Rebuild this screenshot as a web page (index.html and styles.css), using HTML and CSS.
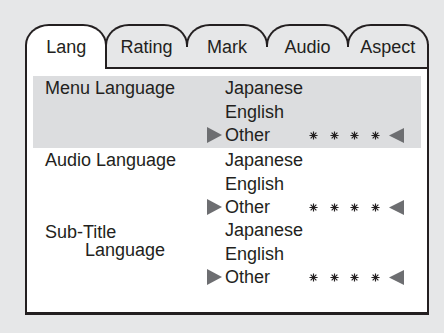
FILE: index.html
```html
<!DOCTYPE html>
<html lang="en">
<head>
    <meta charset="UTF-8">
    <title>Setup - Lang</title>
    <link rel="stylesheet" href="styles.css">
</head>
<body>
    <div class="frame">
        <div class="tabs">
            <div class="tab active">Lang</div>
            <div class="tab">Rating</div>
            <div class="tab">Mark</div>
            <div class="tab">Audio</div>
            <div class="tab">Aspect</div>
        </div>
        <div class="sheet">
            <div class="section current">
                <div class="label">Menu Language</div>
                <div class="options">
                    <div class="opt"><span class="name">Japanese</span></div>
                    <div class="opt"><span class="name">English</span></div>
                    <div class="opt sel">
                        <svg class="pointer" viewBox="0 0 15 16"><polygon points="0,0 15,8 0,16"/></svg>
                        <span class="name">Other</span>
                        <span class="stars">
                            <svg viewBox="0 0 10 10"><path d="M5 0.5V9.5M0.5 5H9.5M1.8 1.8L8.2 8.2M8.2 1.8L1.8 8.2"/></svg>
                            <svg viewBox="0 0 10 10"><path d="M5 0.5V9.5M0.5 5H9.5M1.8 1.8L8.2 8.2M8.2 1.8L1.8 8.2"/></svg>
                            <svg viewBox="0 0 10 10"><path d="M5 0.5V9.5M0.5 5H9.5M1.8 1.8L8.2 8.2M8.2 1.8L1.8 8.2"/></svg>
                            <svg viewBox="0 0 10 10"><path d="M5 0.5V9.5M0.5 5H9.5M1.8 1.8L8.2 8.2M8.2 1.8L1.8 8.2"/></svg>
                        </span>
                        <svg class="back" viewBox="0 0 15 15"><polygon points="15,0 0,7.5 15,15"/></svg>
                    </div>
                </div>
            </div>
            <div class="section">
                <div class="label">Audio Language</div>
                <div class="options">
                    <div class="opt"><span class="name">Japanese</span></div>
                    <div class="opt"><span class="name">English</span></div>
                    <div class="opt sel">
                        <svg class="pointer" viewBox="0 0 15 16"><polygon points="0,0 15,8 0,16"/></svg>
                        <span class="name">Other</span>
                        <span class="stars">
                            <svg viewBox="0 0 10 10"><path d="M5 0.5V9.5M0.5 5H9.5M1.8 1.8L8.2 8.2M8.2 1.8L1.8 8.2"/></svg>
                            <svg viewBox="0 0 10 10"><path d="M5 0.5V9.5M0.5 5H9.5M1.8 1.8L8.2 8.2M8.2 1.8L1.8 8.2"/></svg>
                            <svg viewBox="0 0 10 10"><path d="M5 0.5V9.5M0.5 5H9.5M1.8 1.8L8.2 8.2M8.2 1.8L1.8 8.2"/></svg>
                            <svg viewBox="0 0 10 10"><path d="M5 0.5V9.5M0.5 5H9.5M1.8 1.8L8.2 8.2M8.2 1.8L1.8 8.2"/></svg>
                        </span>
                        <svg class="back" viewBox="0 0 15 15"><polygon points="15,0 0,7.5 15,15"/></svg>
                    </div>
                </div>
            </div>
            <div class="section">
                <div class="label two">
                    <div>Sub-Title</div>
                    <div class="indent">Language</div>
                </div>
                <div class="options">
                    <div class="opt"><span class="name">Japanese</span></div>
                    <div class="opt"><span class="name">English</span></div>
                    <div class="opt sel">
                        <svg class="pointer" viewBox="0 0 15 16"><polygon points="0,0 15,8 0,16"/></svg>
                        <span class="name">Other</span>
                        <span class="stars">
                            <svg viewBox="0 0 10 10"><path d="M5 0.5V9.5M0.5 5H9.5M1.8 1.8L8.2 8.2M8.2 1.8L1.8 8.2"/></svg>
                            <svg viewBox="0 0 10 10"><path d="M5 0.5V9.5M0.5 5H9.5M1.8 1.8L8.2 8.2M8.2 1.8L1.8 8.2"/></svg>
                            <svg viewBox="0 0 10 10"><path d="M5 0.5V9.5M0.5 5H9.5M1.8 1.8L8.2 8.2M8.2 1.8L1.8 8.2"/></svg>
                            <svg viewBox="0 0 10 10"><path d="M5 0.5V9.5M0.5 5H9.5M1.8 1.8L8.2 8.2M8.2 1.8L1.8 8.2"/></svg>
                        </span>
                        <svg class="back" viewBox="0 0 15 15"><polygon points="15,0 0,7.5 15,15"/></svg>
                    </div>
                </div>
            </div>
        </div>
    </div>
</body>
</html>
```

FILE: styles.css
```css
body {
    margin: 0;
    background: #e6e7e8;
    font-family: "Liberation Sans", Arial, sans-serif;
    font-size: 18px;
    color: #231f20;
}
.frame {
    width: 404px;
    margin: 24px 0 0 25px;
}
.tabs {
    display: flex;
    height: 45px;
}
.tab {
    flex: 1;
    position: relative;
    isolation: isolate;
    margin-left: -2px;
    padding-top: 13px;
    line-height: 20px;
    text-align: center;
    border-bottom: 2px solid #231f20;
}
.tab:first-child {
    margin-left: 0;
}
.tab::before {
    content: "";
    position: absolute;
    left: 0;
    right: 0;
    top: 0;
    height: 23px;
    box-sizing: border-box;
    border: 2px solid #231f20;
    border-bottom: 0;
    border-radius: 24px 24px 0 0 / 21px 21px 0 0;
    z-index: -1;
}
.tab.active {
    border-bottom-color: transparent;
}
.tab.active::before {
    height: auto;
    bottom: -2px;
    background: #fff;
}
.tab:last-child::after {
    content: "";
    position: absolute;
    right: 0;
    top: 20px;
    bottom: 0;
    width: 2px;
    background: #231f20;
}
.sheet {
    background: #fff;
    border: 2px solid #231f20;
    border-top: 0;
    border-bottom-width: 3px;
    padding: 7px 6px 24px;
}
.section {
    display: grid;
    grid-template-columns: 174px 1fr;
}
.section.current {
    background: #dcdddf;
    padding-bottom: 2px;
}
.label {
    padding-left: 12px;
    line-height: 24px;
}
.label.two {
    line-height: 18px;
    padding-top: 5px;
}
.label .indent {
    padding-left: 40px;
}
.opt {
    display: flex;
    align-items: center;
    height: 24px;
    padding-left: 18px;
}
.opt:last-child {
    height: 22px;
}
.opt.sel {
    padding-left: 0;
}
.pointer {
    width: 15px;
    height: 16px;
    margin-right: 3px;
    fill: #6d6e71;
}
.name {
    width: 84px;
}
.stars {
    display: flex;
    align-items: center;
}
.stars svg {
    width: 9px;
    height: 9px;
    margin-right: 11.5px;
    stroke: #231f20;
    stroke-width: 1.3;
}
.stars svg:last-child {
    margin-right: 9px;
}
.back {
    width: 15px;
    height: 15px;
    fill: #6d6e71;
}
```
